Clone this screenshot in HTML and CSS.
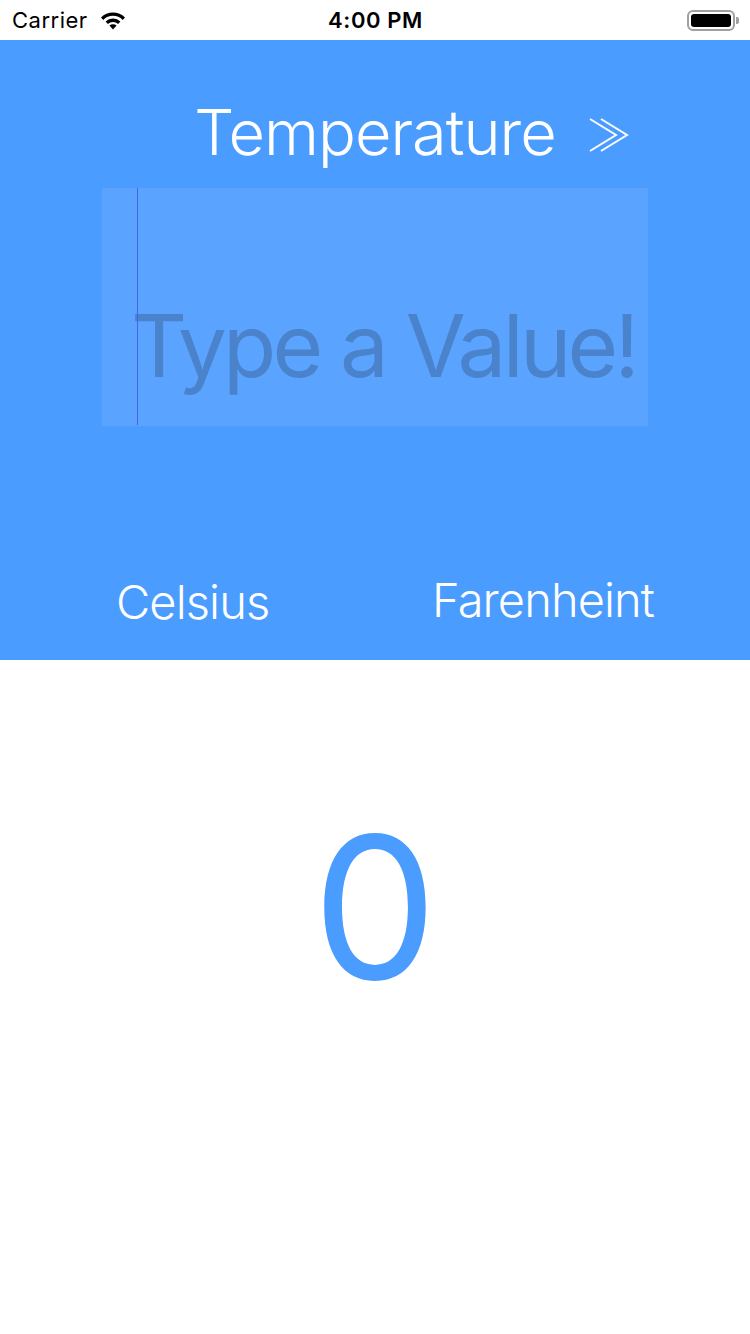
FILE: index.html
```html
<!DOCTYPE html>
<html>
<head>
<meta charset="utf-8">
<link rel="stylesheet" href="styles.css">
</head>
<body>
<div class="screen">
  <div class="status">
    <div class="status-left">
      <span class="carrier">Carrier</span>
      <svg class="wifi" width="26" height="20" viewBox="0 0 26 20">
        <path d="M13 19.5 L9.4 15.6 A5.2 5.2 0 0 1 16.6 15.6 Z" fill="#000"/>
        <path d="M5.6 11.6 A10.6 10.6 0 0 1 20.4 11.6 L18.1 14.0 A7.4 7.4 0 0 0 7.9 14.0 Z" fill="#000"/>
        <path d="M1.0 7.5 A16.8 16.8 0 0 1 25.0 7.5 L22.7 9.9 A13.6 13.6 0 0 0 3.3 9.9 Z" fill="#000"/>
      </svg>
    </div>
    <div class="time">4:00 PM</div>
    <div class="status-right">
      <div class="battery"><div class="battery-fill"></div></div>
      <div class="battery-cap"></div>
    </div>
  </div>
  <div class="panel">
    <div class="title-row">
      <div></div>
      <div class="title">Temperature</div>
      <div class="next">
        <svg width="40" height="34" viewBox="0 0 40 34">
          <polyline points="1,1 27,17 1,33" fill="none" stroke="#fff" stroke-width="2"/>
          <polyline points="12,1 38,17 12,33" fill="none" stroke="#fff" stroke-width="2"/>
        </svg>
      </div>
    </div>
    <div class="input">
      <div class="cursor"></div>
      <div class="placeholder">Type a Value!</div>
    </div>
    <div class="units">
      <span class="unit celsius">Celsius</span>
      <span class="unit farenheit">Farenheint</span>
    </div>
  </div>
  <div class="result">
    <div class="value">0</div>
  </div>
</div>
</body>
</html>
```
FILE: styles.css
```css
html, body {
  margin: 0;
  padding: 0;
  background: #fff;
}
body {
  font-family: Inter, "Liberation Sans", sans-serif;
}
.screen {
  width: 750px;
  height: 1334px;
  display: flex;
  flex-direction: column;
}
.status {
  height: 40px;
  display: flex;
  align-items: center;
  justify-content: space-between;
  padding: 0 11px 0 12px;
  box-sizing: border-box;
}
.status-left {
  display: flex;
  align-items: center;
  gap: 12px;
  width: 200px;
}
.carrier {
  font-size: 22px;
  color: #000;
  letter-spacing: 0.5px;
}
.wifi {
  margin-top: -1px;
}
.time {
  font-size: 22px;
  font-weight: 600;
  color: #000;
  letter-spacing: 0.6px;
}
.status-right {
  width: 200px;
  display: flex;
  justify-content: flex-end;
  align-items: center;
}
.battery {
  width: 48px;
  height: 21px;
  border: 2px solid #a0a0a0;
  border-radius: 6px;
  box-sizing: border-box;
  padding: 2px;
}
.battery-fill {
  width: 100%;
  height: 100%;
  background: #000;
  border-radius: 3px;
}
.battery-cap {
  width: 3px;
  height: 7px;
  background: #a0a0a0;
  border-radius: 0 2px 2px 0;
  margin-left: 1px;
}
.panel {
  height: 620px;
  background: #4a9cff;
  display: flex;
  flex-direction: column;
  box-sizing: border-box;
  padding-top: 52px;
}
.title-row {
  display: grid;
  grid-template-columns: 1fr auto 1fr;
  align-items: center;
  height: 80px;
}
.title {
  font-size: 63px;
  font-weight: 300;
  color: #fff;
  letter-spacing: -1px;
  line-height: 80px;
}
.next {
  padding-left: 33px;
  display: flex;
  align-items: center;
  padding-top: 6px;
}
.input {
  margin: 16px 0 0 102px;
  width: 546px;
  height: 238px;
  background: #5aa4ff;
  position: relative;
  display: flex;
  align-items: flex-end;
  box-sizing: border-box;
  padding: 0 0 30px 29px;
}
.cursor {
  position: absolute;
  left: 35px;
  top: 0;
  width: 1px;
  height: 237px;
  background: #4b5ef0;
}
.placeholder {
  font-size: 87px;
  color: #4a82cc;
  line-height: 100px;
  letter-spacing: -3.8px;
  white-space: nowrap;
}
.units {
  display: flex;
  justify-content: space-between;
  padding: 0 96px 0 116px;
  margin-top: 148px;
}
.unit {
  font-size: 47px;
  font-weight: 300;
  color: #fff;
  line-height: 56px;
  letter-spacing: -0.9px;
}
.farenheit {
  margin-top: -2px;
}
.result {
  flex: 1;
  display: flex;
  justify-content: center;
  padding-top: 142px;
}
.value {
  font-size: 198px;
  font-weight: 400;
  color: #4a9cff;
  line-height: 210px;
}
```
